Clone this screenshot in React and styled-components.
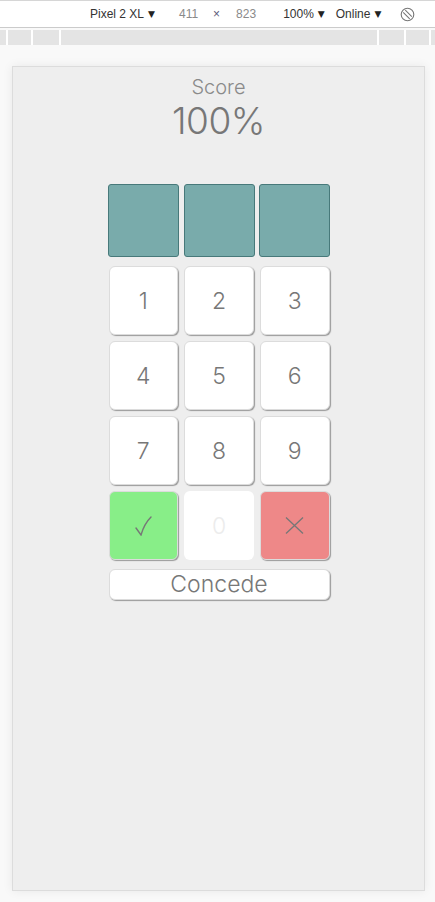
import React from "react";
import styled, { createGlobalStyle } from "styled-components";

const Global = createGlobalStyle`
  html, body { margin: 0; padding: 0; }
  body { background: #f9f9f9; width: 435px; height: 902px; overflow: hidden; }
  * { box-sizing: border-box; }
`;

const Page = styled.div`
  width: 435px;
  height: 902px;
  display: flex;
  flex-direction: column;
  background: #f9f9f9;
`;

const Toolbar = styled.div`
  height: 28px;
  flex: none;
  background: #ffffff;
  border-top: 1px solid #d6d6d6;
  border-bottom: 1px solid #cbcbcb;
  display: flex;
  align-items: center;
  padding-left: 90px;
  font-family: "Liberation Sans", Arial, sans-serif;
  font-size: 12px;
  color: #333;
`;

const ToolItem = styled.span`
  display: inline-flex;
  align-items: center;
  margin-left: ${(p) => p.$ml || 0}px;
  color: ${(p) => p.$color || "#333"};
  white-space: nowrap;
`;

const Caret = styled.span`
  font-family: "DejaVu Sans", sans-serif;
  font-size: 9px;
  margin-left: 4px;
  color: #222;
`;

const Ruler = styled.div`
  margin-top: 2px;
  height: 15px;
  flex: none;
  display: flex;
  gap: 2px;
  background: #ffffff;
`;

const RulerSeg = styled.div`
  width: ${(p) => p.$w}px;
  flex: ${(p) => (p.$grow ? 1 : "none")};
  background: #e4e4e4;
`;

const Stage = styled.div`
  flex: 1;
  padding: 21px 0 10px 12px;
  background: #f9f9f9;
`;

const Device = styled.div`
  width: 413px;
  height: 825px;
  border: 1px solid #dcdcdc;
  background: #eeeeee;
  box-shadow: 0 0 10px rgba(0, 0, 0, 0.07);
  display: flex;
  flex-direction: column;
  align-items: center;
  padding-top: 8px;
  font-family: Inter, "Noto Sans", sans-serif;
  font-weight: 300;
`;

const ScoreLabel = styled.div`
  font-size: 20px;
  line-height: 24px;
  color: #8a8a8a;
`;

const ScoreValue = styled.div`
  font-size: 37px;
  line-height: 44px;
  color: #777;
  letter-spacing: -0.5px;
`;

const TileRow = styled.div`
  margin-top: 41px;
  display: grid;
  grid-template-columns: repeat(3, 71px);
  column-gap: 4.5px;
  margin-left: 1px;
`;

const Tile = styled.div`
  height: 73px;
  background: #79abab;
  border: 1px solid #47797a;
  border-radius: 3px;
`;

const KeyGrid = styled.div`
  margin-top: 9px;
  display: grid;
  grid-template-columns: repeat(3, 69.5px);
  grid-auto-rows: 69px;
  column-gap: 6.25px;
  row-gap: 6px;
  margin-left: 1px;
`;

const Key = styled.button`
  border: 1px solid ${(p) => (p.$disabled ? "transparent" : "#dcdcdc")};
  border-radius: 6px;
  background: ${(p) => p.$bg || "#ffffff"};
  box-shadow: ${(p) => (p.$disabled ? "none" : "1px 1px 1px #9a9a9a")};
  color: ${(p) => (p.$disabled ? "#ececec" : "#777")};
  font-family: Inter, "Noto Sans", sans-serif;
  font-weight: 300;
  font-size: 23px;
  display: flex;
  align-items: center;
  justify-content: center;
  padding: 0;
  cursor: pointer;
`;

const Concede = styled.button`
  margin-top: 8.5px;
  margin-left: 1px;
  width: 221px;
  height: 31.5px;
  border: 1px solid #dcdcdc;
  border-radius: 6px;
  background: #ffffff;
  box-shadow: 1px 1px 1px #9a9a9a;
  color: #777;
  font-family: Inter, "Noto Sans", sans-serif;
  font-weight: 300;
  font-size: 23px;
  line-height: 1;
  padding: 0;
`;

const RotateIcon = () => (
  <svg width="15" height="15" viewBox="0 0 15 15" fill="none" stroke="#777" strokeWidth="1.1">
    <circle cx="7.5" cy="7.5" r="6.3" />
    <path d="M3.2 5.3 L9.7 11.8 M5.3 3.2 L11.8 9.7" />
  </svg>
);

const CheckIcon = () => (
  <svg width="17" height="20" viewBox="0 0 17 20" fill="none" stroke="#777" strokeWidth="1.4" strokeLinecap="round">
    <path d="M1 12 L6 19 C8 12 11 6 16 1" />
  </svg>
);

const CrossIcon = () => (
  <svg width="19" height="17" viewBox="0 0 19 17" fill="none" stroke="#777" strokeWidth="1.3">
    <path d="M1 0.5 L18 16.5 M18 0.5 L1 16.5" />
  </svg>
);

export default function App() {
  const digits = ["1", "2", "3", "4", "5", "6", "7", "8", "9"];
  return (
    <>
      <Global />
      <Page>
        <Toolbar>
          <ToolItem>
            Pixel 2 XL<Caret>▼</Caret>
          </ToolItem>
          <ToolItem $ml={24} $color="#8a8a8a">411</ToolItem>
          <ToolItem $ml={15} $color="#5a5a7a">×</ToolItem>
          <ToolItem $ml={16} $color="#8a8a8a">823</ToolItem>
          <ToolItem $ml={27}>
            100%<Caret>▼</Caret>
          </ToolItem>
          <ToolItem $ml={11}>
            Online<Caret>▼</Caret>
          </ToolItem>
          <ToolItem $ml={19}>
            <RotateIcon />
          </ToolItem>
        </Toolbar>
        <Ruler>
          <RulerSeg $w={6} />
          <RulerSeg $w={23} />
          <RulerSeg $w={26} />
          <RulerSeg $grow />
          <RulerSeg $w={25} />
          <RulerSeg $w={23} />
          <RulerSeg $w={4} />
        </Ruler>
        <Stage>
          <Device>
            <ScoreLabel>Score</ScoreLabel>
            <ScoreValue>100%</ScoreValue>
            <TileRow>
              <Tile />
              <Tile />
              <Tile />
            </TileRow>
            <KeyGrid>
              {digits.map((d) => (
                <Key key={d}>{d}</Key>
              ))}
              <Key $bg="#88ee88" aria-label="submit">
                <CheckIcon />
              </Key>
              <Key $disabled>0</Key>
              <Key $bg="#ee8888" aria-label="clear">
                <CrossIcon />
              </Key>
            </KeyGrid>
            <Concede>Concede</Concede>
          </Device>
        </Stage>
      </Page>
    </>
  );
}
